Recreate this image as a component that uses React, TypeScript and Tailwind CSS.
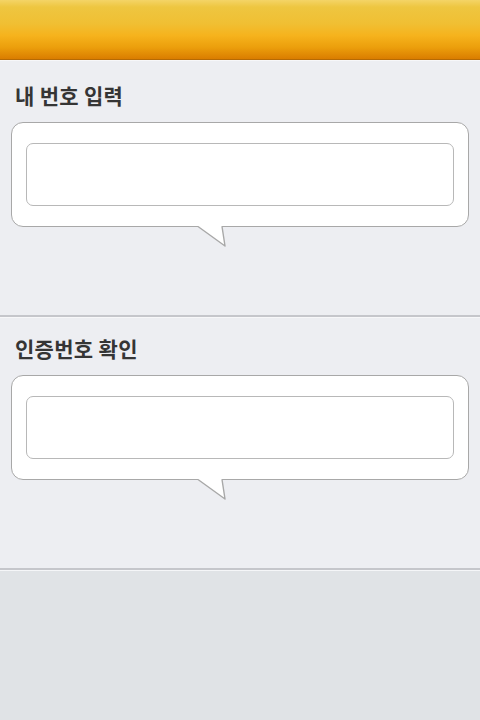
function Bubble() {
  return (
    <div className="relative mx-[11px] h-[105px] rounded-[12px] border-[1.5px] border-[#a8a8a8] bg-white px-[14px] pt-[20px]">
      <input
        type="text"
        className="block h-[63px] w-full rounded-[7px] border-[1.5px] border-[#b8b8b8] bg-white outline-none"
      />
      <svg
        className="absolute left-[184px] top-[calc(100%-1px)]"
        width="32"
        height="24"
        viewBox="0 0 32 24"
      >
        <rect x="2.5" y="0" width="23" height="2.5" fill="#fff" />
        <polygon points="2,1.5 29,21 26,1.5" fill="#fff" />
        <polyline
          points="2,1.5 29,21 26,1.5"
          fill="none"
          stroke="#a8a8a8"
          strokeWidth="1.4"
          strokeLinejoin="round"
        />
      </svg>
    </div>
  );
}

function Section({ title, first }: { title: string; first?: boolean }) {
  return (
    <section
      className={
        first
          ? "border-t border-b-2 border-t-[#f7f7f9] border-b-[#c5c6cb] bg-[#edeef2] pt-[22px] pb-[88px]"
          : "border-t border-b-2 border-t-[#f7f7f9] border-b-[#c5c6cb] bg-[#edeef2] pt-[18px] pb-[88px]"
      }
    >
      <h2 className="px-[15px] text-[21px] leading-[24px] font-bold tracking-[0.3px] text-[#353535]">
        {title}
      </h2>
      <div className="mt-[15px]">
        <Bubble />
      </div>
    </section>
  );
}

export default function App() {
  return (
    <div
      className="flex min-h-[720px] w-full flex-col bg-[#e0e3e6]"
      style={{ fontFamily: '"Noto Sans CJK KR", "Noto Sans", sans-serif' }}
    >
      <header className="h-[60px] border-b border-[#b56a05] bg-[linear-gradient(to_bottom,#f4d466_0%,#eec640_12%,#f0bf33_40%,#f6b31d_60%,#ec9f0c_80%,#da7d00_100%)]" />
      <Section title="내 번호 입력" first />
      <Section title="인증번호 확인" />
      <div className="flex-1 border-t border-[#f5f6f8]" />
    </div>
  );
}
